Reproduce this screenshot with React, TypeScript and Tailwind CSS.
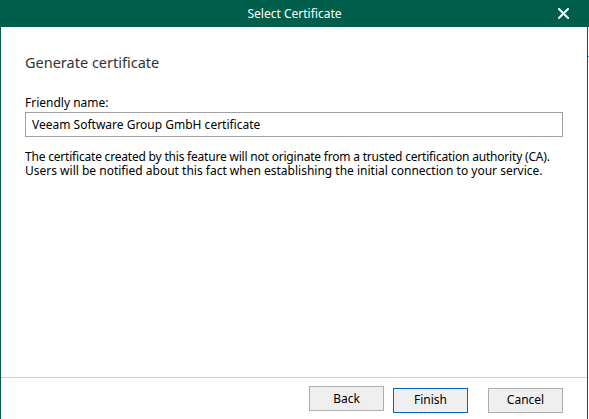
import React from 'react'

const font = { fontFamily: '"Noto Sans", "Open Sans", sans-serif' }

function CloseIcon() {
  return (
    <svg width="11" height="11" viewBox="0 0 11 11" className="block">
      <path d="M1 1 L10 10 M10 1 L1 10" stroke="white" strokeWidth="2" strokeLinecap="square" />
    </svg>
  )
}

function DialogButton({ label, primary }: { label: string; primary?: boolean }) {
  return (
    <button
      className={
        primary
          ? 'h-[25px] w-[75px] border border-[#0067c0] bg-[#efefef] text-[12px] text-black'
          : 'h-[25px] w-[75px] border border-[#adadad] bg-[#efefef] text-[12px] text-black'
      }
    >
      {label}
    </button>
  )
}

export default function App() {
  return (
    <div className="flex h-[419px] w-[589px] flex-col overflow-hidden bg-white text-black" style={font}>
      {/* Title bar */}
      <div className="relative flex h-[27px] shrink-0 items-center justify-center bg-[#005f4b]">
        <span className="text-[12px] text-white">Select Certificate</span>
        <div className="absolute right-[20px] top-[8px]">
          <CloseIcon />
        </div>
      </div>

      <div className="flex flex-1">
        {/* Dialog body */}
        <div className="flex flex-1 flex-col border-x border-[#005f4b]">
          <div className="flex flex-1 flex-col px-6 pt-[25px]">
            <h1 className="text-[14.5px] leading-[20px] text-[#333]">Generate certificate</h1>

            <label className="mt-[23px] text-[12px] leading-[16px]">Friendly name:</label>
            <div className="mt-px flex h-[25px] w-[538px] items-center border border-[#a0a0a0] px-[6px] text-[12px]">
              Veeam Software Group GmbH certificate
            </div>

            <div className="mt-[13px] whitespace-nowrap text-[12px]">
              <p className="h-[14px] leading-[14px] tracking-[-0.2px]">
                The certificate created by this feature will not originate from a trusted certification authority (CA).
              </p>
              <p className="h-[14px] leading-[14px]">
                Users will be notified about this fact when establishing the initial connection to your service.
              </p>
            </div>
          </div>

          {/* Footer */}
          <div className="h-[42px] shrink-0 border-t border-[#d0d0d0]">
            <div className="flex justify-end pr-[24px] pt-[8px]">
              <DialogButton label="Back" />
              <div className="ml-[9px]">
                <DialogButton label="Finish" primary />
              </div>
              <div className="ml-[20px]">
                <DialogButton label="Cancel" />
              </div>
            </div>
          </div>
        </div>

        {/* Edge of the window behind */}
        <div className="flex w-px flex-col bg-white">
          <div className="h-[29px]" />
          <div className="h-px bg-[#1e90ff]" />
          <div className="h-[4px]" />
          <div className="h-px bg-[#d9d9d9]" />
        </div>
      </div>
    </div>
  )
}
